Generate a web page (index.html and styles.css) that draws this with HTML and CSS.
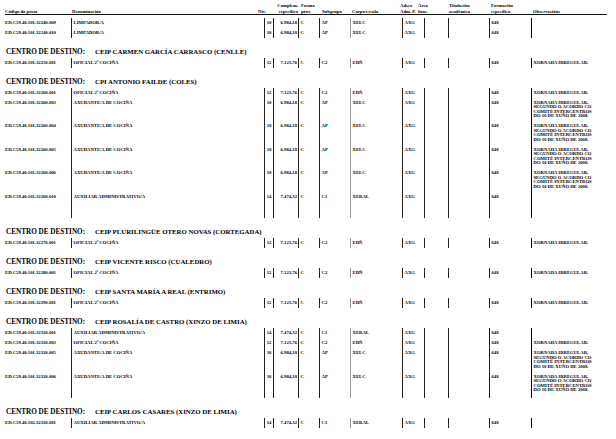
FILE: index.html
```html
<!DOCTYPE html>
<html lang="gl">
<head>
<meta charset="utf-8">
<title>Relación de postos</title>
<link rel="stylesheet" href="styles.css">
</head>
<body>
<div class="doc">
  <div class="hdr">
    <div class="h"><span></span><span>Código do posto</span></div>
    <div class="h"><span></span><span>Denominación</span></div>
    <div class="h"><span></span><span>Niv.</span></div>
    <div class="h h-right"><span>Complem.</span><span>específico</span></div>
    <div class="h h-pad"><span>Forma</span><span>prov.</span></div>
    <div class="h"><span></span><span>Subgrupo</span></div>
    <div class="h"><span></span><span>Corpo/escala</span></div>
    <div class="h"><span>Adscr.</span><span>Adm. P.</span></div>
    <div class="h"><span>Área</span><span>func.</span></div>
    <div class="h"><span>Titulación</span><span>académica</span></div>
    <div class="h"><span>Formación</span><span>específica</span></div>
    <div class="h"><span></span><span>Observacións</span></div>
  </div>

  <div class="row">
    <div class="c code">ED.C59.40.101.32240.009</div><div class="c">LIMPADOR/A</div><div class="c niv">10</div><div class="c ce">6.984,18</div><div class="c">C</div><div class="c">AP</div><div class="c corpo">XELC</div><div class="c">AXG</div><div class="c"></div><div class="c"></div><div class="c">648</div><div class="c obs"></div>
  </div>
  <div class="row">
    <div class="c code">ED.C59.40.101.32240.010</div><div class="c">LIMPADOR/A</div><div class="c niv">10</div><div class="c ce">6.984,18</div><div class="c">C</div><div class="c">AP</div><div class="c corpo">XELC</div><div class="c">AXG</div><div class="c"></div><div class="c"></div><div class="c">648</div><div class="c obs"></div>
  </div>

  <div class="sec"><span class="sec-label">CENTRO DE DESTINO:</span><span class="sec-name">CEIP CARMEN GARCÍA CARRASCO (CENLLE)</span></div>
  <div class="row">
    <div class="c code">ED.C59.40.101.32250.001</div><div class="c">OFICIAL 2ª COCIÑA</div><div class="c niv">12</div><div class="c ce">7.123,76</div><div class="c">C</div><div class="c">C2</div><div class="c corpo">EDÑ</div><div class="c">AXG</div><div class="c"></div><div class="c"></div><div class="c">648</div><div class="c obs">XORNADA IRREGULAR.</div>
  </div>

  <div class="sec"><span class="sec-label">CENTRO DE DESTINO:</span><span class="sec-name">CPI ANTONIO FAILDE (COLES)</span></div>
  <div class="row">
    <div class="c code">ED.C59.40.101.32260.001</div><div class="c">OFICIAL 2ª COCIÑA</div><div class="c niv">12</div><div class="c ce">7.123,76</div><div class="c">C</div><div class="c">C2</div><div class="c corpo">EDÑ</div><div class="c">AXG</div><div class="c"></div><div class="c"></div><div class="c">648</div><div class="c obs">XORNADA IRREGULAR.</div>
  </div>
  <div class="row">
    <div class="c code">ED.C59.40.101.32260.003</div><div class="c">AXUDANTE/A DE COCIÑA</div><div class="c niv">10</div><div class="c ce">6.984,18</div><div class="c">C</div><div class="c">AP</div><div class="c corpo">XELC</div><div class="c">AXG</div><div class="c"></div><div class="c"></div><div class="c">648</div><div class="c obs">XORNADA IRREGULAR,<br>SEGUNDO O ACORDO CO<br>COMITÉ INTERCENTROS<br>DO 10 DE XUÑO DE 2008.</div>
  </div>
  <div class="row">
    <div class="c code">ED.C59.40.101.32260.004</div><div class="c">AXUDANTE/A DE COCIÑA</div><div class="c niv">10</div><div class="c ce">6.984,18</div><div class="c">C</div><div class="c">AP</div><div class="c corpo">XELC</div><div class="c">AXG</div><div class="c"></div><div class="c"></div><div class="c">648</div><div class="c obs">XORNADA IRREGULAR,<br>SEGUNDO O ACORDO CO<br>COMITÉ INTERCENTROS<br>DO 10 DE XUÑO DE 2008.</div>
  </div>
  <div class="row">
    <div class="c code">ED.C59.40.101.32260.005</div><div class="c">AXUDANTE/A DE COCIÑA</div><div class="c niv">10</div><div class="c ce">6.984,18</div><div class="c">C</div><div class="c">AP</div><div class="c corpo">XELC</div><div class="c">AXG</div><div class="c"></div><div class="c"></div><div class="c">648</div><div class="c obs">XORNADA IRREGULAR,<br>SEGUNDO O ACORDO CO<br>COMITÉ INTERCENTROS<br>DO 10 DE XUÑO DE 2008.</div>
  </div>
  <div class="row">
    <div class="c code">ED.C59.40.101.32260.006</div><div class="c">AXUDANTE/A DE COCIÑA</div><div class="c niv">10</div><div class="c ce">6.984,18</div><div class="c">C</div><div class="c">AP</div><div class="c corpo">XELC</div><div class="c">AXG</div><div class="c"></div><div class="c"></div><div class="c">648</div><div class="c obs">XORNADA IRREGULAR,<br>SEGUNDO O ACORDO CO<br>COMITÉ INTERCENTROS<br>DO 10 DE XUÑO DE 2008.</div>
  </div>
  <div class="row tall last">
    <div class="c code">ED.C59.40.101.32260.010</div><div class="c">AUXILIAR ADMINISTRATIVO/A</div><div class="c niv">14</div><div class="c ce">7.474,32</div><div class="c">C</div><div class="c">C1</div><div class="c corpo">XERAL</div><div class="c">AXG</div><div class="c"></div><div class="c"></div><div class="c">648</div><div class="c obs"></div>
  </div>

  <div class="sec"><span class="sec-label">CENTRO DE DESTINO:</span><span class="sec-name">CEIP PLURILINGÜE OTERO NOVAS (CORTEGADA)</span></div>
  <div class="row">
    <div class="c code">ED.C59.40.101.32270.001</div><div class="c">OFICIAL 2ª COCIÑA</div><div class="c niv">12</div><div class="c ce">7.123,76</div><div class="c">C</div><div class="c">C2</div><div class="c corpo">EDÑ</div><div class="c">AXG</div><div class="c"></div><div class="c"></div><div class="c">648</div><div class="c obs">XORNADA IRREGULAR.</div>
  </div>

  <div class="sec"><span class="sec-label">CENTRO DE DESTINO:</span><span class="sec-name">CEIP VICENTE RISCO (CUALEDRO)</span></div>
  <div class="row">
    <div class="c code">ED.C59.40.101.32280.001</div><div class="c">OFICIAL 2ª COCIÑA</div><div class="c niv">12</div><div class="c ce">7.123,76</div><div class="c">C</div><div class="c">C2</div><div class="c corpo">EDÑ</div><div class="c">AXG</div><div class="c"></div><div class="c"></div><div class="c">648</div><div class="c obs">XORNADA IRREGULAR.</div>
  </div>

  <div class="sec"><span class="sec-label">CENTRO DE DESTINO:</span><span class="sec-name">CEIP SANTA MARÍA A REAL (ENTRIMO)</span></div>
  <div class="row">
    <div class="c code">ED.C59.40.101.32290.001</div><div class="c">OFICIAL 2ª COCIÑA</div><div class="c niv">12</div><div class="c ce">7.123,76</div><div class="c">C</div><div class="c">C2</div><div class="c corpo">EDÑ</div><div class="c">AXG</div><div class="c"></div><div class="c"></div><div class="c">648</div><div class="c obs">XORNADA IRREGULAR.</div>
  </div>

  <div class="sec"><span class="sec-label">CENTRO DE DESTINO:</span><span class="sec-name">CEIP ROSALÍA DE CASTRO (XINZO DE LIMIA)</span></div>
  <div class="row">
    <div class="c code">ED.C59.40.101.32320.001</div><div class="c">AUXILIAR ADMINISTRATIVO/A</div><div class="c niv">14</div><div class="c ce">7.474,32</div><div class="c">C</div><div class="c">C1</div><div class="c corpo">XERAL</div><div class="c">AXG</div><div class="c"></div><div class="c"></div><div class="c">648</div><div class="c obs"></div>
  </div>
  <div class="row">
    <div class="c code">ED.C59.40.101.32320.003</div><div class="c">OFICIAL 2ª COCIÑA</div><div class="c niv">12</div><div class="c ce">7.123,76</div><div class="c">C</div><div class="c">C2</div><div class="c corpo">EDÑ</div><div class="c">AXG</div><div class="c"></div><div class="c"></div><div class="c">648</div><div class="c obs">XORNADA IRREGULAR.</div>
  </div>
  <div class="row">
    <div class="c code">ED.C59.40.101.32320.005</div><div class="c">AXUDANTE/A DE COCIÑA</div><div class="c niv">10</div><div class="c ce">6.984,18</div><div class="c">C</div><div class="c">AP</div><div class="c corpo">XELC</div><div class="c">AXG</div><div class="c"></div><div class="c"></div><div class="c">648</div><div class="c obs">XORNADA IRREGULAR,<br>SEGUNDO O ACORDO CO<br>COMITÉ INTERCENTROS<br>DO 10 DE XUÑO DE 2008.</div>
  </div>
  <div class="row last">
    <div class="c code">ED.C59.40.101.32320.006</div><div class="c">AXUDANTE/A DE COCIÑA</div><div class="c niv">10</div><div class="c ce">6.984,18</div><div class="c">C</div><div class="c">AP</div><div class="c corpo">XELC</div><div class="c">AXG</div><div class="c"></div><div class="c"></div><div class="c">648</div><div class="c obs">XORNADA IRREGULAR,<br>SEGUNDO O ACORDO CO<br>COMITÉ INTERCENTROS<br>DO 10 DE XUÑO DE 2008.</div>
  </div>

  <div class="sec"><span class="sec-label">CENTRO DE DESTINO:</span><span class="sec-name">CEIP CARLOS CASARES (XINZO DE LIMIA)</span></div>
  <div class="row">
    <div class="c code">ED.C59.40.102.32320.001</div><div class="c">AUXILIAR ADMINISTRATIVO/A</div><div class="c niv">14</div><div class="c ce">7.474,32</div><div class="c">C</div><div class="c">C1</div><div class="c corpo">XERAL</div><div class="c">AXG</div><div class="c"></div><div class="c"></div><div class="c">648</div><div class="c obs"></div>
  </div>
</div>
</body>
</html>
```

FILE: styles.css
```css
html, body {
  margin: 0;
  padding: 0;
  background: #ffffff;
}

body {
  width: 616px;
  height: 439px;
  overflow: hidden;
  font-family: "Liberation Serif", "Times New Roman", serif;
  font-weight: bold;
  color: #000;
}

.doc {
  display: flex;
  flex-direction: column;
}

/* column header */
.hdr {
  display: grid;
  grid-template-columns: 67px 186px 12px 30px 22px 30px 48px 18px 31px 42px 42px 1fr;
  margin: 0 9px 2.5px 5px;
  padding-top: 2px;
  height: 12px;
  border-bottom: 1px solid #111;
  font-size: 4.7px;
  line-height: 5.5px;
  align-items: end;
}

.h {
  display: flex;
  flex-direction: column;
  white-space: nowrap;
}

.h span {
  height: 5.5px;
}

.h-right {
  align-items: flex-end;
  padding-right: 2px;
}

.h-pad {
  padding-left: 1px;
}

/* data rows */
.row {
  display: grid;
  grid-template-columns: 71px 193px 9px 25px 21px 31px 52px 22px 24px 41px 42px 1fr;
  font-size: 4.7px;
  line-height: 4.5px;
}

.c {
  padding: 3px 0 2.5px 1.5px;
  border-left: 1px solid #222;
  white-space: nowrap;
}

.c.code {
  border-left: 0;
  padding-left: 5px;
}

.c.niv {
  text-align: center;
  padding-left: 0;
}

.c.ce {
  text-align: right;
  padding-right: 1px;
}

.c.corpo {
  border-left-color: #9a9a9a;
}

.c.obs {
  border-left: 1.3px solid #000;
  padding-left: 1.5px;
}

.row.tall .c {
  min-height: 18px;
}

.row.last .c {
  padding-bottom: 5.5px;
}

/* section titles */
.sec {
  display: flex;
  margin-top: 8px;
  height: 12px;
  line-height: 12px;
  padding-left: 6px;
  font-size: 7.2px;
  white-space: nowrap;
}

.sec-label {
  width: 89px;
}

.sec-name {
  font-size: 6.8px;
}
```
